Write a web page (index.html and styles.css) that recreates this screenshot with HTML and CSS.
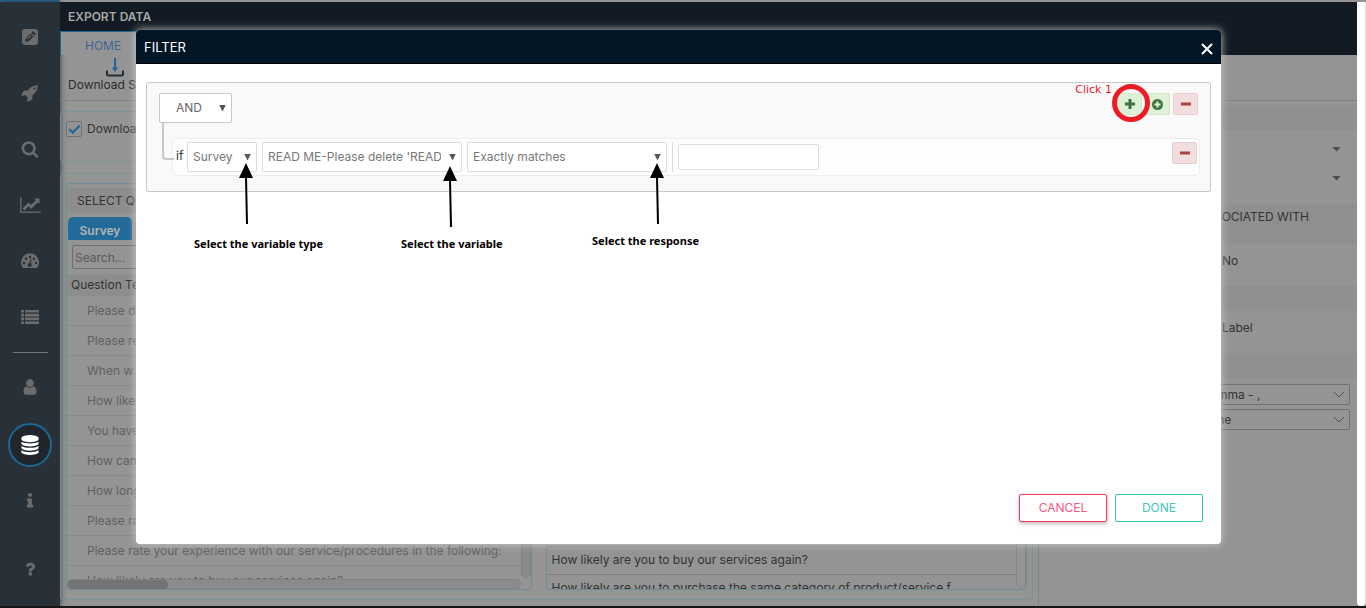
FILE: index.html
```
<!DOCTYPE html>
<html lang="en">
<head>
<meta charset="utf-8">
<title>Export Data</title>
<link rel="stylesheet" href="styles.css">
</head>
<body>
<div class="page">
  <div class="top-strip"></div>
  <div class="app">
    <nav class="sidebar" aria-label="Main">
      <button class="nav-item" aria-label="Edit"><svg width="16" height="16" viewBox="0 0 16 16"><path fill-rule="evenodd" d="M3 0h10a3 3 0 0 1 3 3v10a3 3 0 0 1-3 3H3a3 3 0 0 1-3-3V3a3 3 0 0 1 3-3zM3 13l4-1 4.5-4.500-3-3L4 9zM9.300 3.800l3 3L13.500 5.500q.5-.5 0-1l-2-2q-.5-.5-1 0z"/><path d="M5 9.500l3.500-3.500.8.7-3.500 3.500z"/></svg></button>
      <button class="nav-item" aria-label="Launch"><svg width="18" height="18" viewBox="0 0 1792 1792"><path d="M1440 448q0-40-28-68t-68-28-68 28-28 68 28 68 68 28 68-28 28-68zm224-288q0 249-75.5 430.5t-253.5 360.5q-81 80-195 176l-20 379q-2 16-16 26l-384 224q-7 4-16 4-12 0-23-9l-64-64q-13-14-8-32l85-276-281-281-276 85q-3 1-9 1-14 0-23-9l-64-64q-17-19-5-39l224-384q10-14 26-16l379-20q96-114 176-195 188-187 358-258t431-71q14 0 24 9.500t10 22.500z"/></svg></button>
      <button class="nav-item" aria-label="Search"><svg width="18" height="18" viewBox="0 0 1792 1792"><path d="M1216 832q0-185-131.5-316.5t-316.5-131.5-316.5 131.5-131.5 316.5 131.5 316.5 316.5 131.5 316.5-131.5 131.5-316.5zm512 832q0 52-38 90t-90 38q-54 0-90-38l-343-342q-179 124-399 124-143 0-273.5-55.5t-225-150-150-225-55.5-273.5 55.5-273.5 150-225 225-150 273.5-55.5 273.5 55.5 225 150 150 225 55.500 273.500q0 220-124 399l343 343q37 37 37 90z"/></svg></button>
      <button class="nav-item" aria-label="Reports"><svg width="21" height="18" viewBox="0 0 2048 1792"><path d="M2048 1536v128h-2048v-1536h128v1408h1920zm-128-1248v435q0 21-19.5 29.500t-35.500-7.500l-121-121-633 633q-10 10-23 10t-23-10l-233-233-416 416-192-192 585-585q10-10 23-10t23 10l233 233 464-464-121-121q-16-16-7.500-35.500t29.500-19.500h435q14 0 23 9t9 23z"/></svg></button>
      <button class="nav-item" aria-label="Dashboard"><svg width="18" height="16" viewBox="0 0 18 16"><path d="M2 15A9 9 0 1 1 16 15Z"/><g class="nav-cut"><circle cx="3" cy="10" r="1.200"/><circle cx="5" cy="5.800" r="1.200"/><circle cx="9" cy="4" r="1.200"/><circle cx="13" cy="5.800" r="1.200"/><circle cx="15" cy="10" r="1.200"/><circle cx="8.700" cy="12" r="2"/><path d="M8 12L9.600 6.200l.9.300L9.500 12z"/></g></svg></button>
      <button class="nav-item" aria-label="Lists"><svg width="18" height="14" viewBox="0 0 18 14"><path d="M0 0h3v2.600H0zM4 0h14v2.600H4zM0 3.800h3v2.600H0zM4 3.800h14v2.600H4zM0 7.600h3v2.600H0zM4 7.600h14v2.600H4zM0 11.400h3V14H0zM4 11.400h14V14H4z"/></svg></button>
      <hr class="nav-rule">
      <button class="nav-item" aria-label="User"><svg width="18" height="18" viewBox="0 0 1792 1792"><path d="M1536 1399q0 109-62.500 187t-150.500 78h-854q-88 0-150.500-78t-62.500-187q0-85 8.500-160.500t31.500-152 58.500-131 94-89 134.500-34.500q131 128 313 128t313-128q76 0 134.500 34.500t94 89 58.500 131 31.500 152 8.500 160.500zm-256-887q0 159-112.500 271.500t-271.500 112.500-271.500-112.500-112.500-271.500 112.500-271.500 271.500-112.500 271.500 112.500 112.500 271.500z"/></svg></button>
      <button class="nav-item nav-active" aria-label="Data"><svg width="20" height="20" viewBox="0 0 1792 1792"><path d="M896 768q237 0 443-43t325-127v170q0 69-103 128t-280 93.500-385 34.500-385-34.500-280-93.500-103-128v-170q119 84 325 127t443 43zm0 768q237 0 443-43t325-127v170q0 69-103 128t-280 93.500-385 34.500-385-34.500-280-93.500-103-128v-170q119 84 325 127t443 43zm0-384q237 0 443-43t325-127v170q0 69-103 128t-280 93.500-385 34.500-385-34.500-280-93.500-103-128v-170q119 84 325 127t443 43zm0-1152q208 0 385 34.500t280 93.500 103 128v128q0 69-103 128t-280 93.500-385 34.500-385-34.500-280-93.500-103-128v-128q0-69 103-128t280-93.500 385-34.500z"/></svg></button>
      <button class="nav-item" aria-label="Information"><svg width="18" height="18" viewBox="0 0 1792 1792"><path d="M1216 1344v128q0 26-19 45t-45 19h-512q-26 0-45-19t-19-45v-128q0-26 19-45t45-19h64v-384h-64q-26 0-45-19t-19-45v-128q0-26 19-45t45-19h384q26 0 45 19t19 45v576h64q26 0 45 19t19 45zm-128-1152v192q0 26-19 45t-45 19h-256q-26 0-45-19t-19-45v-192q0-26 19-45t45-19h256q26 0 45 19t19 45z"/></svg></button>
      <button class="nav-item nav-last" aria-label="Help"><svg width="18" height="18" viewBox="0 0 1792 1792"><path d="M1088 1256v240q0 16-12 28t-28 12h-240q-16 0-28-12t-12-28v-240q0-16 12-28t28-12h240q16 0 28 12t12 28zm316-600q0 54-15.500 101t-35 76.500-55 59.500-57.500 43.500-61 35.500q-41 23-68.500 65t-27.500 67q0 17-12 32.500t-28 15.500h-240q-15 0-25.500-18.500t-10.500-37.500v-45q0-83 65-156.500t143-108.500q59-27 84-56t25-76q0-42-46.500-74t-107.500-32q-65 0-108 29-35 25-107 115-13 16-31 16-12 0-25-8l-164-125q-13-10-15.500-25t5.500-28q160-266 464-266 80 0 161 31t146 83 106 127.500 41 158.500z"/></svg></button>
    </nav>
    <main class="main">
      <header class="main-head">
        <h1 class="main-title">EXPORT DATA</h1>
        <div class="tab-row"><a class="home-tab" href="#">HOME</a></div>
      </header>
      <div class="toolbar">
        <button class="download"><svg width="18" height="19" viewBox="0 0 18 19"><path class="tray" d="M1 12.500V16q0 1.500 1.500 1.500h13q1.500 0 1.500-1.500v-3.500"/><path class="down" d="M9 0v12"/><path class="down-head" d="M6 9.500h6L9 14z"/></svg><span>Download S</span></button>
      </div>
      <div class="workspace">
        <div class="left-area">
          <section class="card option-card"><label class="check"><input type="checkbox" checked><span>Download</span></label></section>
          <section class="card columns">
            <div class="panel questions">
              <h2 class="panel-title">SELECT QUESTIONS</h2>
              <div class="tabs"><button class="tab tab-on">Survey</button><button class="tab">Other</button></div>
              <div class="search"><input type="text" placeholder="Search..." aria-label="Search questions"></div>
              <div class="list-head">Question Text</div>
              <div class="list-area">
                <ul class="list">
                  <li>Please d</li><li>Please re</li><li>When w</li><li>How like</li><li>You have</li><li>How can</li><li>How long</li><li>Please ra</li>
                  <li>Please rate your experience with our service/procedures in the following:</li>
                  <li>How likely are you to buy our services again?</li>
                </ul>
                <div class="bar-v"></div>
              </div>
              <div class="bar-h"><div class="thumb"></div></div>
            </div>
            <div class="panel chosen">
              <ul class="chosen-list"><li>How likely are you to buy our services again?</li><li>How likely are you to purchase the same category of product/service f</li></ul>
              <div class="bar-v bar-light"></div>
            </div>
          </section>
        </div>
        <aside class="side">
          <div class="band"></div>
          <div class="caret-row"><i class="caret"></i></div>
          <div class="caret-row"><i class="caret"></i></div>
          <h2 class="band band-tall">ASSOCIATED WITH</h2>
          <div class="value">No</div>
          <div class="band"></div>
          <div class="value">Label</div>
          <div class="band"></div>
          <div class="side-selects">
            <div class="side-select"><select aria-label="Delimiter"><option>Comma - ,</option></select><svg width="12" height="8" viewBox="0 0 12 8"><path d="M1 1l5 5 5-5"/></svg></div>
            <div class="side-select"><select aria-label="Qualifier"><option>None</option></select><svg width="12" height="8" viewBox="0 0 12 8"><path d="M1 1l5 5 5-5"/></svg></div>
          </div>
        </aside>
      </div>
    </main>
    <div class="page-scroll"></div>
  </div>
  <div class="bottom-strip"></div>
</div>

<div class="modal" role="dialog" aria-labelledby="filter-title">
  <header class="modal-head">
    <h2 id="filter-title">FILTER</h2>
    <button class="close" aria-label="Close"><svg width="12" height="12" viewBox="0 0 12 12"><path d="M1 1l10 10M11 1L1 11"/></svg></button>
  </header>
  <div class="modal-body">
    <div class="group">
      <div class="group-top">
        <div class="pick pick-and"><select aria-label="Operator"><option>AND</option></select><i class="arrow"></i></div>
        <div class="actions">
          <button class="act add" aria-label="Add rule"><svg width="10" height="10" viewBox="0 0 10 10"><path d="M5 0v10M0 5h10"/></svg></button>
          <button class="act add" aria-label="Add group"><svg width="11" height="11" viewBox="0 0 11 11"><circle class="disc" cx="5.500" cy="5.500" r="5.500"/><path class="disc-plus" d="M5.500 2.500v6M2.500 5.500h6"/></svg></button>
          <button class="act remove" aria-label="Remove group"><svg width="10" height="10" viewBox="0 0 10 10"><path d="M0 5h10"/></svg></button>
          <span class="click-note">Click 1</span>
          <span class="ring"></span>
        </div>
      </div>
      <div class="branch"></div>
      <div class="rule">
        <span class="if">if</span>
        <div class="pick pick-type"><select aria-label="Variable type"><option>Survey</option></select><i class="arrow"></i></div>
        <div class="pick pick-wide"><select aria-label="Variable"><option>READ ME-Please delete 'READ ME'</option></select><i class="arrow"></i></div>
        <div class="pick pick-wide"><select aria-label="Response"><option>Exactly matches</option></select><i class="arrow"></i></div>
        <div class="divider"></div>
        <input class="match" type="text" aria-label="Value">
        <button class="act remove rule-remove" aria-label="Remove rule"><svg width="10" height="10" viewBox="0 0 10 10"><path d="M0 5h10"/></svg></button>
      </div>
    </div>
  </div>
  <footer class="modal-foot"><button class="btn cancel">CANCEL</button><button class="btn done">DONE</button></footer>
  <div class="callout callout-type"><svg width="14" height="61" viewBox="0 0 14 61"><path d="M7 0l7 15H0z"/><path class="shaft" d="M7 14l1 47"/></svg><span>Select the variable type</span></div>
  <div class="callout callout-variable"><svg width="14" height="61" viewBox="0 0 14 61"><path d="M7 0l7 15H0z"/><path class="shaft" d="M7 14l1 47"/></svg><span>Select the variable</span></div>
  <div class="callout callout-response"><svg width="14" height="61" viewBox="0 0 14 61"><path d="M7 0l7 15H0z"/><path class="shaft" d="M7 14l1 47"/></svg><span>Select the response</span></div>
</div>
</body>
</html>
```
FILE: styles.css
```
* { box-sizing: border-box; }
body { margin: 0; font-family: Inter, "Noto Sans", sans-serif; font-size: 12px; line-height: 16px; color: #333; }
button, input, select { font: inherit; color: inherit; margin: 0; }
button { padding: 0; border: 0; background: none; }
h1, h2, ul { margin: 0; padding: 0; font-size: inherit; font-weight: inherit; list-style: none; }
svg { display: block; }

.page { display: flex; flex-direction: column; height: 100vh; overflow: hidden; background: #949494; }
.top-strip { height: 2px; background: linear-gradient(to right, #236f9e 60px, #949494 60px); flex: none; }
.bottom-strip { height: 2px; background: #171717; flex: none; }
.app { display: flex; flex: 1; min-height: 0; }

.sidebar { width: 60px; flex: none; display: flex; flex-direction: column; align-items: center; padding-top: 7px; background: #283138; box-shadow: 0 0 6px #283138; }
.nav-item { display: flex; align-items: center; justify-content: center; width: 44px; height: 56px; flex: none; }
.nav-item svg { fill: #6c6c6c; }
.nav-item .nav-cut { fill: #283138; }
.nav-rule { width: 35px; height: 1px; margin: 7px 0 6px; border: 0; background: #777; flex: none; }
.nav-active { height: 44px; margin: 8px 0 6px; border: 2px solid #1d6795; border-radius: 50%; background: #20262c; }
.nav-active svg { fill: #fff; }
.nav-last { margin-top: 12px; }

.main { flex: 1; min-width: 0; display: flex; flex-direction: column; }
.main-head { background: #121b23; color: #a8a8a8; flex: none; }
.main-title { padding: 7px 8px 6px; font-weight: 600; }
.tab-row { display: flex; height: 24px; }
.home-tab { width: 110px; padding: 6px 0 0 24px; background: #949494; border-top: 1px solid #1d6795; border-left: 1px solid #1d6795; color: #3c6690; text-decoration: none; }
.toolbar { height: 46px; border-bottom: 1px solid #838383; flex: none; }
.download { display: grid; justify-items: center; align-content: start; margin-left: 8px; padding-top: 3px; height: 40px; width: 94px; white-space: nowrap; color: #2b2b2b; }
.download span { justify-self: start; }
.tray { fill: none; stroke: #222c35; stroke-width: 2; }
.down { stroke: #1d6795; stroke-width: 2; }
.down-head { fill: #1d6795; }
.workspace { display: flex; flex: 1; min-height: 0; }
.left-area { flex: 1; min-width: 0; display: flex; flex-direction: column; gap: 11px; padding: 10px 5px 6px 0; }
.card { border: 1px solid #7b9299; border-radius: 4px; }
.option-card { height: 51px; padding: 9px 5px; flex: none; }
.check { display: flex; align-items: center; gap: 5px; }
.check input { appearance: none; width: 16px; height: 16px; border: 1px solid #707070; border-radius: 2px; display: grid; place-items: center; }
.check input::after { content: ""; width: 9px; height: 4px; border-left: 2px solid #1d6795; border-bottom: 2px solid #1d6795; rotate: -45deg; margin-bottom: 3px; }
.columns { flex: 1; min-height: 0; display: flex; gap: 14px; padding: 9px 5px; }
.panel { min-width: 0; border: 1px solid #6f8d96; border-radius: 4px; overflow: hidden; }
.questions { display: flex; flex: 465 1 0; flex-direction: column; }
.panel-title { margin-top: 4px; padding: 5px 10px 4px; background: #8d8d8d; flex: none; }
.tabs { display: flex; gap: 3px; padding: 4px 1px 0; flex: none; }
.tab { width: 64px; height: 23px; padding-top: 4px; border: 1px solid #838383; border-radius: 5px 5px 0 0; }
.tab-on { background: #226a98; border-color: #226a98; color: #b5b5b5; font-weight: 600; }
.search { padding: 5px; flex: none; }
.search input { width: 100%; height: 24px; padding: 0 2px; background: none; border: 1px solid #707070; border-radius: 2px; display: block; }
.search input::placeholder { color: #5b5b5b; opacity: 1; }
.list-head { height: 22px; padding: 3px 4px; background: #8d8d8d; flex: none; }
.list-area { display: flex; flex: 1; min-height: 0; }
.list { flex: 1; overflow: hidden; color: #616161; white-space: nowrap; }
.list li { height: 30px; padding: 7px 20px; border-bottom: 1px solid #8a8a8a; }
.bar-v { width: 10px; margin-bottom: 1px; background: #8a8a8a; border: 1px solid #818181; border-radius: 0 0 5px 5px; flex: none; }
.bar-h { height: 10px; margin-right: 10px; background: #8b8b8b; border: 1px solid #838383; border-radius: 5px; flex: none; }
.thumb { width: 100px; height: 9px; border-radius: 5px; background: #737373; }
.chosen { display: flex; flex: 481 1 0; align-items: stretch; }
.chosen-list { flex: 1; min-width: 0; display: flex; flex-direction: column; justify-content: flex-end; overflow: hidden; }
.chosen-list li { height: 28px; padding: 5px; border-top: 1px solid #7d7d7d; white-space: nowrap; flex: none; }
.chosen-list li:last-child { height: 15px; }
.bar-light { background: none; }

.side { width: 319px; border-left: 1px solid #838383; padding-top: 4px; flex: none; }
.band { height: 25px; background: #8f8f8f; }
.caret-row { height: 29px; display: flex; align-items: center; justify-content: flex-end; padding: 9px 16px 0; }
.caret { width: 9px; height: 5px; background: #4c4c4c; clip-path: polygon(0 0, 100% 0, 50% 100%); }
.band-tall { height: 40px; margin-top: 16px; padding: 5px 0 0 159px; }
.value { height: 42px; padding: 9px 0 0 183px; }
.side-selects { display: grid; gap: 4px; padding: 6px 7px; }
.side-select { display: grid; align-items: center; }
.side-select select { grid-area: 1 / 1; appearance: none; height: 21px; padding: 0 5px 0 154px; background: none; border: 1px solid #707070; border-radius: 2px; opacity: 1; }
.side-select svg { grid-area: 1 / 1; justify-self: end; margin-right: 5px; fill: none; stroke: #555; pointer-events: none; }
.page-scroll { width: 9px; background: #fff; border-right: 1px solid #ddd; border-radius: 0 0 4px 4px; flex: none; }

.modal { position: absolute; inset: 30px 145px 64px 136px; display: flex; flex-direction: column; background: #fff; border-radius: 4px; box-shadow: 0 0 8px #ccc; }
.modal-head { display: flex; align-items: center; justify-content: space-between; height: 34px; padding: 0 8px; background: #021625; border-bottom: 1px solid #000; border-radius: 4px 4px 0 0; color: #fff; font-size: 13px; }
.close svg { stroke: #fff; stroke-width: 2; margin-top: 4px; }
.modal-body { flex: 1; padding: 18px 10px; }
.group { padding: 10px 10px 15px 12px; background: #f9f9f9; border: 1px solid #c8c8c8; border-radius: 2px; }
.group-top { display: flex; justify-content: space-between; height: 30px; }
.pick { display: grid; align-items: center; height: 30px; flex: none; }
.pick select { grid-area: 1 / 1; appearance: none; width: 100%; height: 100%; padding: 0 20px 0 5px; border: 1px solid #ddd; border-radius: 2px; background: #fff; color: #777; text-overflow: clip; }
.arrow { grid-area: 1 / 1; justify-self: end; width: 7px; height: 7px; margin-right: 6px; background: #555; clip-path: polygon(0 0, 100% 0, 50% 100%); pointer-events: none; }
.pick-and { width: 73px; }
.pick-and select { padding-left: 16px; border-color: #c8c8c8; color: #666; }
.pick-type { width: 70px; }
.pick-wide { width: 200px; }
.actions { position: relative; display: flex; gap: 3px; padding-right: 2px; }
.act { display: flex; align-items: center; justify-content: center; width: 25px; height: 22px; border: 1px solid; border-radius: 2px; }
.act svg { fill: none; stroke-width: 3; }
.add { background: #dff0d8; border-color: #d3e8c8; }
.add svg { stroke: #3c763d; }
.add .disc { fill: #3c763d; stroke: none; }
.add .disc-plus { stroke: #dff0d8; stroke-width: 2; }
.remove { background: #f2dede; border-color: #ebccd1; }
.remove svg { stroke: #a94442; }
.click-note { position: absolute; right: 88px; top: -11px; color: #e8202a; white-space: nowrap; font-family: "DejaVu Sans", sans-serif; font-size: 11px; }
.ring { position: absolute; right: 50px; top: -9px; width: 38px; height: 38px; border: 5px solid #ed1c24; border-radius: 50%; }
.branch { position: relative; width: 12px; height: 37px; margin: 0 0 -22px 3px; border-left: 2px solid #c8c8c8; border-bottom: 2px solid #c8c8c8; border-radius: 0 0 0 4px; }
.rule { display: flex; align-items: flex-start; gap: 5px; height: 38px; margin-left: 13px; padding: 3px 2px 3px 3px; background: #fdfdfd; border: 1px solid #eee; border-radius: 5px; }
.if { width: 6px; padding-top: 6px; }
.divider { width: 1px; height: 30px; background: #ddd; }
.match { width: 141px; height: 26px; margin-top: 2px; border: 1px solid #ddd; border-radius: 2px; background: #fff; }
.rule-remove { margin-left: auto; }
.modal-foot { display: flex; justify-content: flex-end; gap: 8px; padding: 0 18px 22px; }
.btn { width: 88px; height: 28px; border: 1px solid; border-radius: 2px; background: #fff; font-size: 12px; }
.cancel { border-color: #ff3366; color: #f5567f; box-shadow: 0 2px 4px #bbb; }
.done { border-color: #2bc4b4; color: #3fc4b5; }

.callout { position: absolute; display: grid; gap: 9px; color: #000; font-family: "Noto Sans", sans-serif; font-weight: 700; font-size: 11px; line-height: 16px; white-space: nowrap; }
.shaft { stroke: #000; stroke-width: 2; }
.callout-type { left: 58px; top: 133px; gap: 12px; }
.callout-type svg { margin-left: 45px; }
.callout-variable { left: 265px; top: 136px; }
.callout-variable svg { margin-left: 42px; }
.callout-response { left: 456px; top: 133px; }
.callout-response svg { margin-left: 58px; }
```
